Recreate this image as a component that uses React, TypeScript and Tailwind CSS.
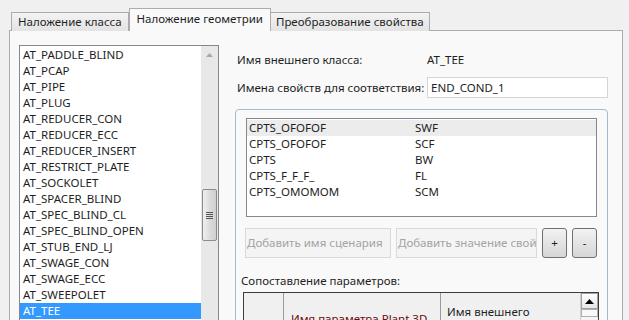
import React from 'react';

const classes = [
    'AT_PADDLE_BLIND',
    'AT_PCAP',
    'AT_PIPE',
    'AT_PLUG',
    'AT_REDUCER_CON',
    'AT_REDUCER_ECC',
    'AT_REDUCER_INSERT',
    'AT_RESTRICT_PLATE',
    'AT_SOCKOLET',
    'AT_SPACER_BLIND',
    'AT_SPEC_BLIND_CL',
    'AT_SPEC_BLIND_OPEN',
    'AT_STUB_END_LJ',
    'AT_SWAGE_CON',
    'AT_SWAGE_ECC',
    'AT_SWEEPOLET',
    'AT_TEE',
];

const mappings = [
    ['CPTS_OFOFOF', 'SWF'],
    ['CPTS_OFOFOF', 'SCF'],
    ['CPTS', 'BW'],
    ['CPTS_F_F_F_', 'FL'],
    ['CPTS_OMOMOM', 'SCM'],
];

export default function App() {
    return (
        <div className="w-[629px] h-[320px] overflow-hidden bg-[#f0f0f0] text-[11.5px] leading-[16px] text-[#1e1e1e] font-['Noto_Sans',sans-serif] whitespace-nowrap">
            {/* Tabs */}
            <div className="flex items-end h-[31px] pl-[11px] relative z-10">
                <div className="h-[19px] px-[6px] flex items-center border border-b-0 border-[#acacac] bg-gradient-to-b from-[#f3f3f3] to-[#e3e3e3]">
                    Наложение класса
                </div>
                <div className="h-[23px] px-[7px] flex items-start pt-[2px] border border-b-0 border-[#acacac] bg-[#f9f9f9]">
                    Наложение геометрии
                </div>
                <div className="h-[19px] px-[5px] flex items-center border border-b-0 border-l-0 border-[#acacac] bg-gradient-to-b from-[#f3f3f3] to-[#e3e3e3]">
                    Преобразование свойства
                </div>
            </div>

            {/* Panel */}
            <div className="-mt-px ml-[9px] w-[614px] h-[300px] border border-[#acacac] bg-[#f9f9f9] flex gap-[16px] pl-[9px] pt-[14px]">
                {/* Class list */}
                <div className="w-[200px] h-[290px] shrink-0 border border-[#828790] bg-white flex">
                    <div className="flex-1 pt-px">
                        {classes.map((c) => (
                            <div
                                key={c}
                                className={
                                    c === 'AT_TEE'
                                        ? 'h-[16px] pl-[3px] bg-[#3399ff] text-white'
                                        : 'h-[16px] pl-[3px]'
                                }
                            >
                                {c}
                            </div>
                        ))}
                    </div>
                    <div className="w-[17px] bg-[#e8e8e8] flex flex-col items-center">
                        <div className="h-[17px] flex items-center justify-center">
                            <svg width="7" height="4" viewBox="0 0 7 4">
                                <path d="M0 4 L3.5 0 L7 4 Z" fill="#a8a8a8" />
                            </svg>
                        </div>
                        <div className="mt-[126px] w-[15px] h-[52px] rounded-[2px] border border-[#8b8b8b] bg-gradient-to-r from-[#f0f0f0] via-[#dcdcdc] to-[#cfcfcf] flex flex-col items-center justify-center gap-px">
                            <div className="w-[7px] h-px bg-[#555]" />
                            <div className="w-[7px] h-px bg-[#555]" />
                            <div className="w-[7px] h-px bg-[#555]" />
                            <div className="w-[7px] h-px bg-[#555]" />
                        </div>
                    </div>
                </div>

                {/* Right side */}
                <div className="w-[373px] flex flex-col">
                    <div className="flex items-center h-[16px] mt-[7px] pl-[2px]">
                        <span className="w-[190px]">Имя внешнего класса:</span>
                        <span>AT_TEE</span>
                    </div>
                    <div className="flex items-center mt-[9px] pl-[2px]">
                        <span className="w-[190px]">Имена свойств для соответствия:</span>
                        <div className="w-[181px] h-[21px] border border-[#d5d5d5] bg-white pl-[3px] flex items-center">
                            END_COND_1
                        </div>
                    </div>

                    {/* Group box */}
                    <div className="mt-[11px] flex-1 border border-[#a5b9d1] rounded-[4px] pl-[5px] pt-[8px]">
                        <div className="ml-[5px] w-[351px] h-[99px] border border-[#828790] bg-white pt-px">
                            {mappings.map(([a, b], i) => (
                                <div
                                    key={i}
                                    className={
                                        i === 0
                                            ? 'flex h-[16px] pl-[2px] bg-[#ececec]'
                                            : 'flex h-[16px] pl-[2px]'
                                    }
                                >
                                    <span className="w-[166px]">{a}</span>
                                    <span>{b}</span>
                                </div>
                            ))}
                        </div>

                        <div className="flex gap-[5px] mt-[11px] ml-[4px] h-[30px]">
                            <div className="w-[146px] border border-[#d9d9d9] bg-[#f4f4f4] text-[#a3a3a3] flex items-center pl-[1px] overflow-hidden">
                                Добавить имя сценария
                            </div>
                            <div className="w-[141px] border border-[#d9d9d9] bg-[#f4f4f4] text-[#a3a3a3] flex items-center pl-[1px] overflow-hidden">
                                Добавить значение свойства
                            </div>
                            <div className="w-[25px] rounded-[3px] border border-[#707070] bg-gradient-to-b from-[#f2f2f2] to-[#d6d6d6] flex items-center justify-center">
                                +
                            </div>
                            <div className="w-[25px] rounded-[3px] border border-[#707070] bg-gradient-to-b from-[#f2f2f2] to-[#d6d6d6] flex items-center justify-center">
                                -
                            </div>
                        </div>

                        <div className="mt-[15px]">Сопоставление параметров:</div>

                        {/* Parameter table */}
                        <div className="mt-[3px] ml-[2px] w-[356px] h-[60px] border border-[#3c3c3c] bg-[#f0f0f0] flex">
                            <div className="w-[40px] border-r border-[#9a9a9a]" />
                            <div className="w-[157px] border-r border-[#9a9a9a] pl-[7px] pt-[18px] text-[#6b0a0a]">
                                Имя параметра Plant 3D
                            </div>
                            <div className="flex-1 pl-[6px] pt-[11px]">
                                Имя внешнего
                                <br />
                                класса
                            </div>
                            <div className="w-[18px] bg-[#f4f4f4] border-l border-[#d0d0d0] flex flex-col">
                                <div className="h-[16px] border border-[#a0a0a0] bg-gradient-to-b from-white to-[#e6e6e6] flex items-center justify-center">
                                    <svg width="9" height="5" viewBox="0 0 9 5">
                                        <path d="M0 5 L4.5 0 L9 5 Z" fill="#000" />
                                    </svg>
                                </div>
                                <div className="h-[8px] border border-[#b0b0b0] bg-[#f8f8f8]" />
                            </div>
                        </div>
                    </div>
                </div>
            </div>
        </div>
    );
}
